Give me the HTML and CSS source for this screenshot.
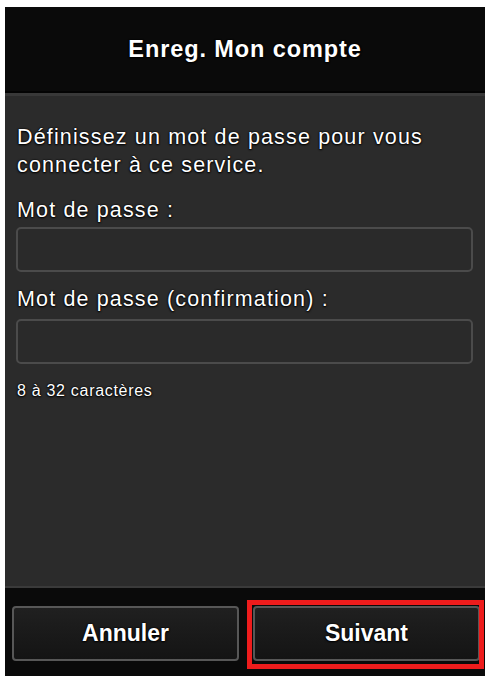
FILE: index.html
```html
<!DOCTYPE html>
<html lang="fr">
<head>
<meta charset="utf-8">
<title>Enreg. Mon compte</title>
<link rel="stylesheet" href="styles.css">
</head>
<body>
<div class="screen">
  <header class="topbar">
    <h1 class="title">Enreg. Mon compte</h1>
  </header>
  <main class="content">
    <p class="intro">Définissez un mot de passe pour vous connecter à ce service.</p>
    <label class="label">Mot de passe :</label>
    <div class="field"></div>
    <label class="label">Mot de passe (confirmation) :</label>
    <div class="field"></div>
    <p class="hint">8 à 32 caractères</p>
  </main>
  <footer class="bottombar">
    <div class="btn">Annuler</div>
    <div class="btn btn-next">Suivant</div>
  </footer>
</div>
</body>
</html>
```
FILE: styles.css
```css
html, body {
  margin: 0;
  padding: 0;
  background: #ffffff;
}
body {
  font-family: "Liberation Sans", Arial, Helvetica, sans-serif;
  overflow: hidden;
}
.screen {
  margin: 7px 0 0 5px;
  width: 480px;
  height: 669px;
  display: flex;
  flex-direction: column;
  background: #2b2b2b;
}
.topbar {
  height: 84px;
  flex: none;
  background: #0a0a0a;
  border-bottom: 2px solid #030303;
  display: flex;
  align-items: center;
  justify-content: center;
}
.title {
  margin: 0;
  font-size: 23.5px;
  font-weight: bold;
  letter-spacing: 0.9px;
  color: #ffffff;
  text-shadow: 0 0 1px #000, 0 0 2px #000, 0 1px 2px #000;
}
.content {
  flex: 1;
  background: #2b2b2b;
  border-top: 3px solid #383838;
  border-bottom: 2px solid #3a3a3a;
  padding: 27px 12px 0 11px;
  color: #ffffff;
  text-shadow: 0 0 1px #000, 0 0 2px #000, 0 1px 2px #000;
}
.intro {
  margin: 0;
  font-size: 21.5px;
  line-height: 28px;
  letter-spacing: 1.15px;
  padding-left: 1px;
}
.label {
  display: block;
  margin: 16px 0 2px;
  padding-left: 1px;
  font-size: 21.5px;
  line-height: 30px;
  letter-spacing: 1.15px;
}
.label + .field + .label {
  margin-top: 12px;
  margin-bottom: 5px;
}
.field {
  height: 41px;
  border: 2px solid #4b4b4b;
  border-radius: 5px;
  background: #2a2a2a;
}
.hint {
  margin: 18px 0 0;
  padding-left: 1px;
  font-size: 16px;
  line-height: 18px;
  letter-spacing: 0.7px;
}
.bottombar {
  height: 88px;
  flex: none;
  box-sizing: border-box;
  background: #0a0a0a;
  padding: 18px 5px 15px 7px;
  display: flex;
  gap: 14px;
}
.btn {
  flex: 1;
  position: relative;
  box-sizing: border-box;
  height: 55px;
  border: 2px solid #575757;
  border-radius: 4px;
  background: linear-gradient(#202020, #141414);
  color: #ffffff;
  font-size: 23px;
  font-weight: bold;
  display: flex;
  align-items: center;
  justify-content: center;
  text-shadow: 0 0 1px #000, 0 0 2px #000, 0 1px 2px #000;
}
.btn-next::after {
  content: "";
  position: absolute;
  top: -8px;
  right: -6px;
  bottom: -10px;
  left: -8px;
  border: 5px solid #ee1c1c;
}
```
